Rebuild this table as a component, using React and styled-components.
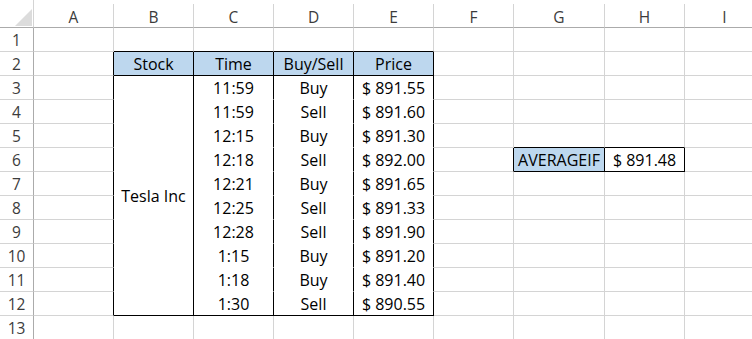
import { Fragment } from 'react';
import styled, { createGlobalStyle } from 'styled-components';

const GRID = '#d4d4d4';
const HEAD_LINE = '#ababab';
const INK = '#000';
const BLUE = '#bdd7ee';

const COLS = ['A', 'B', 'C', 'D', 'E', 'F', 'G', 'H', 'I'];

const trades = [
  ['11:59', 'Buy', '$ 891.55'],
  ['11:59', 'Sell', '$ 891.60'],
  ['12:15', 'Buy', '$ 891.30'],
  ['12:18', 'Sell', '$ 892.00'],
  ['12:21', 'Buy', '$ 891.65'],
  ['12:25', 'Sell', '$ 891.33'],
  ['12:28', 'Sell', '$ 891.90'],
  ['1:15', 'Buy', '$ 891.20'],
  ['1:18', 'Buy', '$ 891.40'],
  ['1:30', 'Sell', '$ 890.55'],
];

const GlobalStyle = createGlobalStyle`
  html, body {
    margin: 0;
    background: #fff;
  }
  body {
    font-family: "Open Sans", "Liberation Sans", sans-serif;
  }
`;

const Sheet = styled.div`
  display: grid;
  grid-template-columns: 34px repeat(6, 80px) 91px 80px 80px;
  grid-template-rows: 28px;
  grid-auto-rows: 24px;
  width: 752px;
  height: 339px;
  overflow: hidden;
  background: #fff;
`;

const ColHead = styled.div`
  box-sizing: border-box;
  margin-top: 4px;
  display: flex;
  align-items: center;
  justify-content: center;
  padding-top: 3px;
  border-right: 1px solid ${GRID};
  border-bottom: 1px solid ${HEAD_LINE};
  color: #3c3c3c;
  font-size: 15.5px;
`;

const Corner = styled(ColHead)`
  align-items: flex-end;
  justify-content: flex-end;
  padding: 0 1px 1px 0;
  margin-top: 0;
`;

const RowHead = styled.div`
  box-sizing: border-box;
  display: flex;
  align-items: center;
  justify-content: center;
  padding-top: 1px;
  border-right: 1px solid ${HEAD_LINE};
  border-bottom: 1px solid ${GRID};
  color: #3c3c3c;
  font-size: 15.5px;
`;

const Cell = styled.div`
  box-sizing: border-box;
  display: flex;
  align-items: center;
  justify-content: center;
  padding-top: 1px;
  white-space: nowrap;
  overflow: hidden;
  grid-row: ${(p) => (p.$span ? `span ${p.$span}` : 'auto')};
  background: ${(p) => p.$fill || '#fff'};
  border-right: 1px solid ${(p) => p.$right || GRID};
  border-bottom: 1px solid ${(p) => p.$bottom || GRID};
  color: ${INK};
  font-size: 16px;
`;

function cellFor(row, col) {
  const inTable = ['B', 'C', 'D', 'E'].includes(col);
  const props = {};
  let text = '';

  if (row === 1 && inTable) props.$bottom = INK;
  if (col === 'A' && row >= 2 && row <= 12) props.$right = INK;

  if (row === 2 && inTable) {
    props.$fill = BLUE;
    props.$right = INK;
    props.$bottom = INK;
    text = { B: 'Stock', C: 'Time', D: 'Buy/Sell', E: 'Price' }[col];
  }

  if (row >= 3 && row <= 12 && inTable) {
    if (col === 'B') {
      // merged B3:B12
      if (row !== 3) return null;
      return (
        <Cell key={col} $span={10} $right={INK} $bottom={INK}>
          Tesla Inc
        </Cell>
      );
    }
    const [time, side, price] = trades[row - 3];
    text = { C: time, D: side, E: price }[col];
    props.$right = INK;
    props.$bottom = row === 12 ? INK : '#fff';
  }

  if (row === 5 && (col === 'G' || col === 'H')) props.$bottom = INK;
  if (row === 6 && col === 'F') props.$right = INK;
  if (row === 6 && col === 'G') {
    props.$fill = BLUE;
    props.$right = INK;
    props.$bottom = INK;
    text = 'AVERAGEIF';
  }
  if (row === 6 && col === 'H') {
    props.$right = INK;
    props.$bottom = INK;
    text = '$ 891.48';
  }

  return (
    <Cell key={col} {...props}>
      {text}
    </Cell>
  );
}

function SelectAll() {
  return (
    <Corner>
      <svg width="17" height="17" viewBox="0 0 17 17">
        <polygon points="0,17 17,17 17,0" fill="#dcdcdc" />
      </svg>
    </Corner>
  );
}

export default function App() {
  const rows = Array.from({ length: 13 }, (_, i) => i + 1);
  return (
    <>
      <GlobalStyle />
      <Sheet>
        <SelectAll />
        {COLS.map((c) => (
          <ColHead key={c}>{c}</ColHead>
        ))}
        {rows.map((r) => (
          <Fragment key={r}>
            <RowHead>{r}</RowHead>
            {COLS.map((c) => cellFor(r, c))}
          </Fragment>
        ))}
      </Sheet>
    </>
  );
}
